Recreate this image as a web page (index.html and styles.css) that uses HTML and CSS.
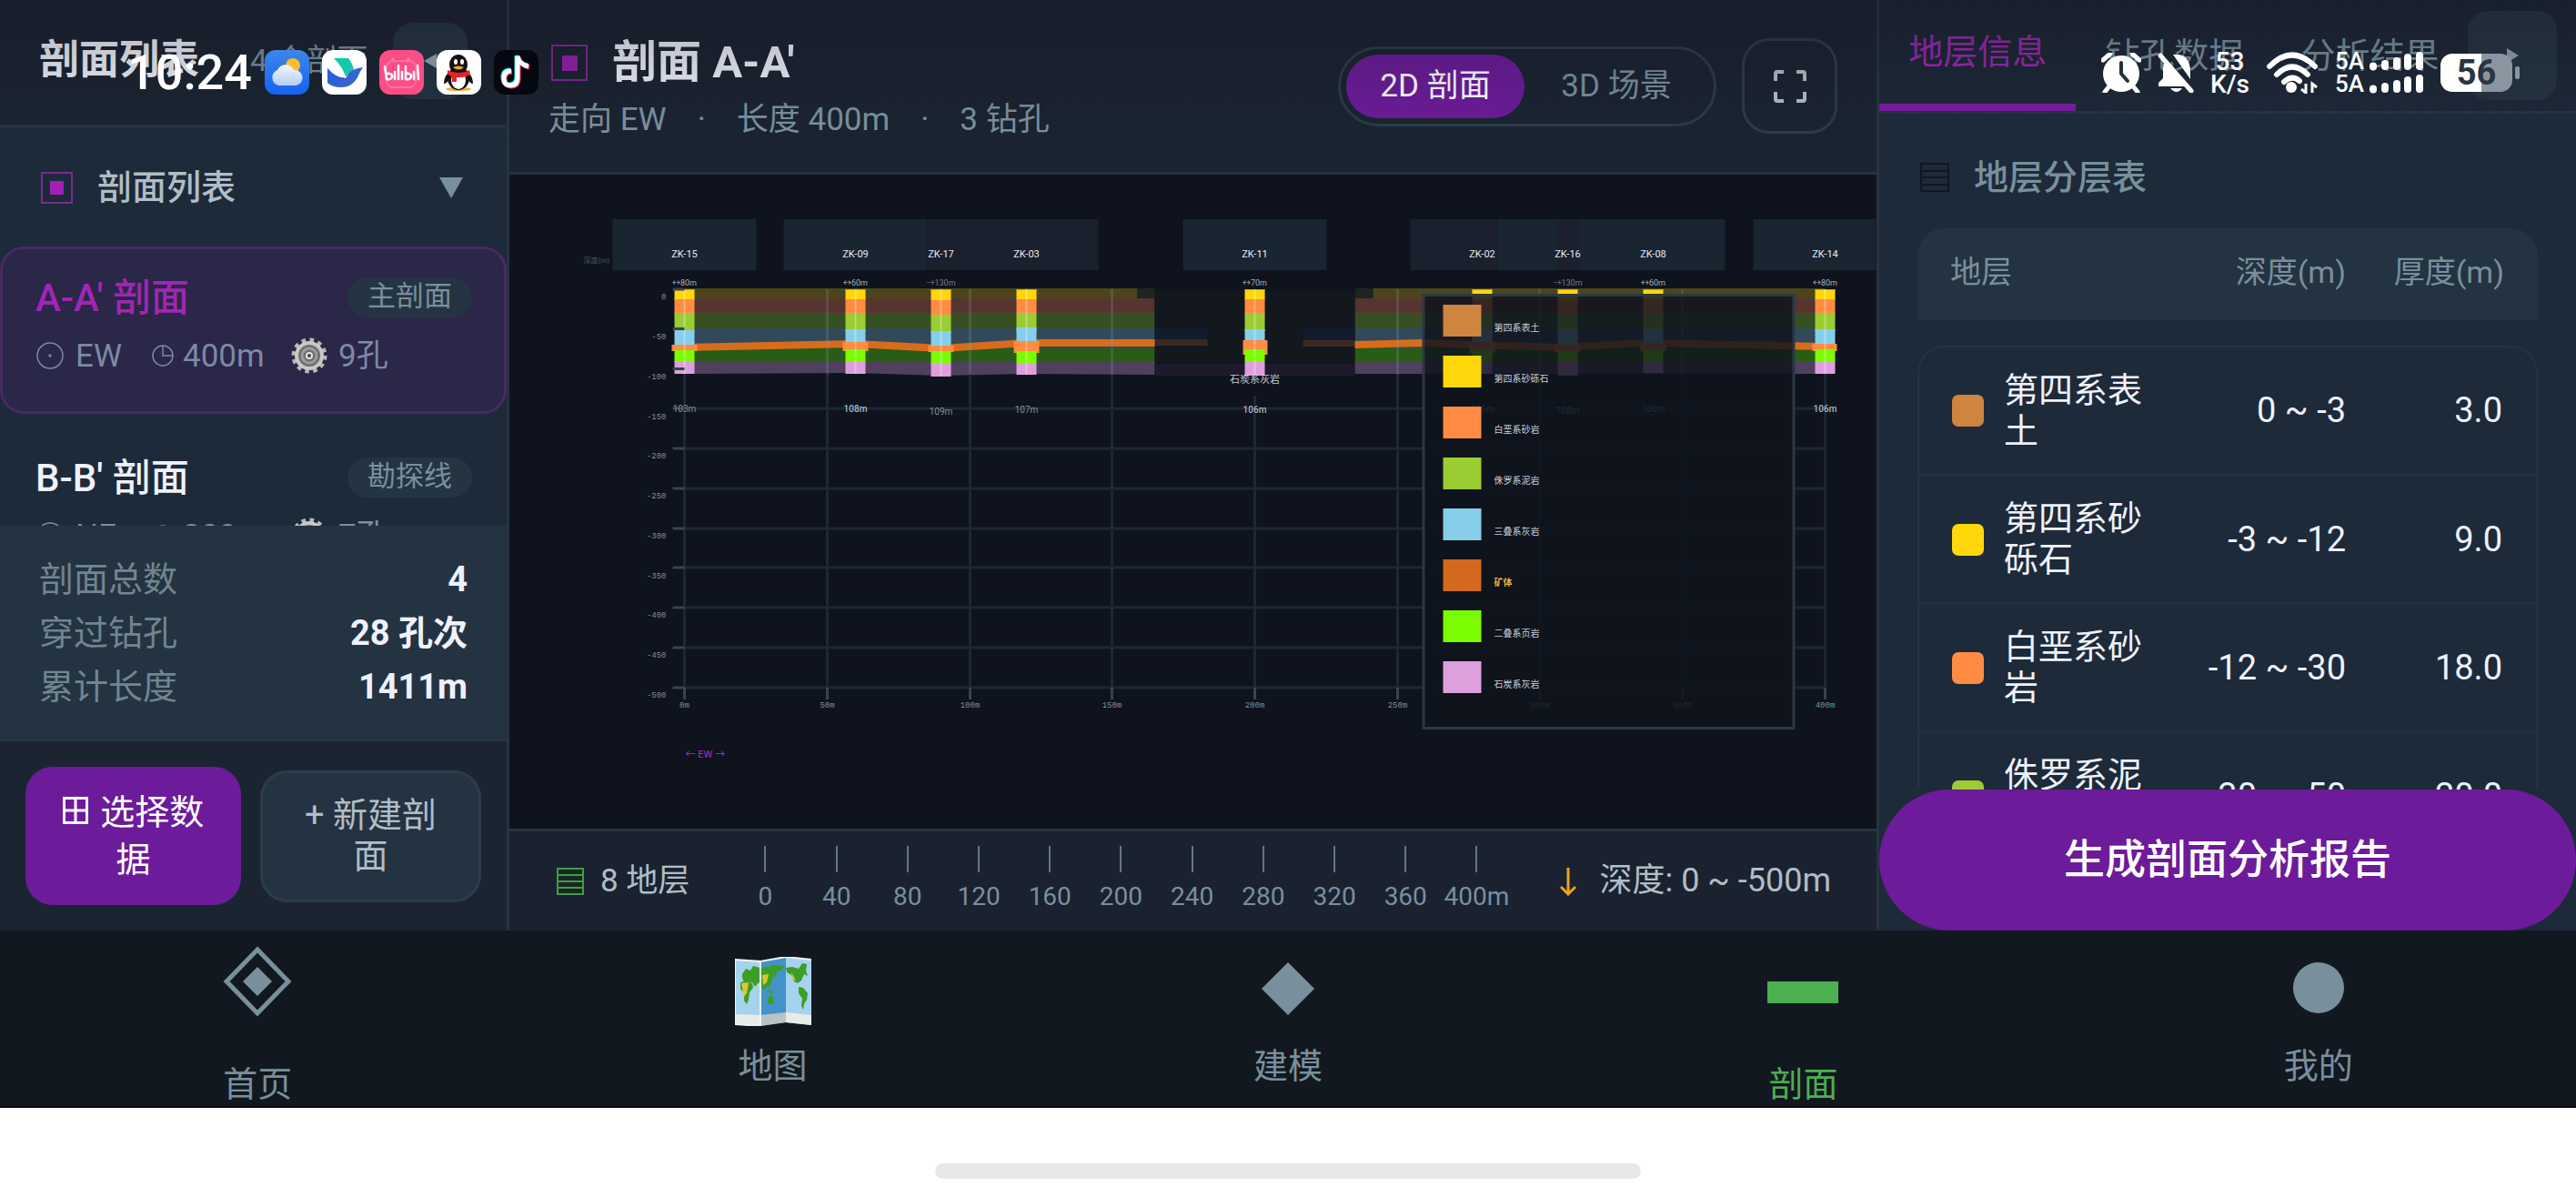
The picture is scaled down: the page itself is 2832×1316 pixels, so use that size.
FILE: index.html
```html
<!DOCTYPE html>
<html lang="zh-CN">
<head>
<meta charset="utf-8">
<meta name="viewport" content="width=device-width, initial-scale=1">
<title>剖面 A-A'</title>
<link rel="stylesheet" href="styles.css">
</head>
<body>
<div class="statusbar">
  <span class="clock">10:24</span>
  <div class="apps">
    <svg class="app" viewBox="0 0 49 49"><defs><linearGradient id="sky" x2="0" y2="1"><stop offset="0" stop-color="#3d86ea"/><stop offset="1" stop-color="#1463f3"/></linearGradient><linearGradient id="cloud" x2="0" y2="1"><stop offset="0" stop-color="#f3f7fd"/><stop offset="1" stop-color="#b3cef8"/></linearGradient></defs><rect width="49" height="49" rx="12" fill="url(#sky)"/><circle cx="31" cy="17" r="8" fill="#fdbb2d"/><path d="M15 39a9 9 0 0 1-1-17 10 10 0 0 1 18 0 8.500 8.500 0 0 1 2 17z" fill="url(#cloud)"/></svg>
    <svg class="app" viewBox="0 0 49 49"><rect width="49" height="49" rx="12" fill="#fff"/><path d="M13 9h16q5 6 6 13l-9 7q-4-11-13-20z" fill="#18c8ae"/><path d="M6 20q9 11 20 11 5-11 19-12-3 4-5 9-6 13-19 13Q11 41 6 36z" fill="#3563cf"/><path d="M6 20q9 11 20 11-3 5-8 8-7 0-12-4z" fill="#2f5fd6"/></svg>
    <svg class="app" viewBox="0 0 49 49"><rect width="49" height="49" rx="12" fill="#fb4d86"/><path d="M14 9l3 4M33 9l-3 4" stroke="#fd86ad" stroke-width="3"/><rect x="8" y="12" width="32" height="29" rx="7" fill="none" stroke="#fd6e9d" stroke-width="2"/><g fill="none" stroke="#fff" stroke-width="2.500" stroke-linecap="round"><path d="M6 18l2 14q6 1 6-3t-6-3M17 24v8M21 17v15M25 24v8M29 18v14q6 1 6-3t-6-3M38 24v8M42 17l1 15"/></g></svg>
    <svg class="app" viewBox="0 0 49 49"><rect width="49" height="49" rx="12" fill="#fff"/><ellipse cx="24" cy="43" rx="14" ry="2" fill="#f7a734"/><path d="M14 24Q8 29 8 37q3 0 5-4zM34 24q6 5 6 13-3 0-5-4z" fill="#111"/><ellipse cx="24" cy="31" rx="12" ry="13" fill="#111"/><ellipse cx="24" cy="33" rx="8" ry="10" fill="#fff"/><ellipse cx="24" cy="16" rx="10" ry="11" fill="#111"/><ellipse cx="21" cy="13" rx="2" ry="3" fill="#fff"/><ellipse cx="28" cy="13" rx="2" ry="3" fill="#fff"/><path d="M18 19q6-3 12 0-6 5-12 0z" fill="#fba81e"/><path d="M12 22q12 6 24 0l1 5q-8 4-15 3v5h-5v-6q-4-1-5-3z" fill="#e9202a"/></svg>
    <svg class="app" viewBox="0 0 49 49"><rect width="49" height="49" rx="12" fill="#050711"/><g fill="none" stroke-width="5"><path d="M18 22q-8 0-8 8t7 8q8 0 8-9V6q2 9 12 11" stroke="#25f4ee"/><path d="M20 24q-8 0-8 8t7 8q8 0 8-9V8q2 9 12 11" stroke="#fe2c55"/><path d="M19 23q-8 0-8 8t7 8q8 0 8-9V7q2 9 12 11" stroke="#fff"/></g></svg>
  </div>
  <div class="signals">
    <svg width="44" height="44" viewBox="0 0 44 44"><circle cx="22" cy="23" r="20" fill="#fff"/><path d="M2 8l8-7M42 8l-8-7M8 38l-4 5M36 38l4 5" stroke="#fff" stroke-width="5" stroke-linecap="round"/><path d="M22 11v12l7 8" fill="none" stroke="#26303f" stroke-width="4" stroke-linecap="round"/></svg>
    <svg width="40" height="44" viewBox="0 0 40 44"><path d="M17 2q18-2 19 18v9zM14 39h13q-6 8-13 0" fill="#fff"/><path d="M7 11l24 26H1v-4l5-5V18q0-4 1-7z" fill="#fff"/><path d="M3 3l34 39" stroke="#fff" stroke-width="5" stroke-linecap="round"/></svg>
    <span class="speed"><b>53</b><b>K/s</b></span>
    <svg width="58" height="46" viewBox="0 0 58 46"><g fill="none" stroke="#fff" stroke-width="6" stroke-linecap="round"><path d="M4 16q25-25 50 0M12 25q17-17 34 0M20 33q9-8 17-1"/></g><circle cx="28" cy="39" r="6" fill="#fff"/><path d="M44 35v10l-5-4M51 45V35l5 4" fill="none" stroke="#fff" stroke-width="3"/></svg>
    <span class="cells"><span class="speed"><b>5A</b><b>5A</b></span>
    <svg width="60" height="46" viewBox="0 0 60 46"><path d="M4 16.500v-1M17 16v-3M30 16v-6M42 16V6M55 16V4M4 41.500v-1M17 41v-3M30 41v-6M42 41V31M55 41V29" stroke="#fff" stroke-width="8" stroke-linecap="round"/></svg></span>
    <span class="battery">56</span>
  </div>
</div>

<div class="workspace">
  <aside class="panel panel-left">
    <header class="list-head">
      <h1>剖面列表</h1><span class="count">4 个剖面</span>
      <button class="collapse" aria-label="收起"><svg width="14" height="16" viewBox="0 0 14 16"><path d="M14 0v16L0 8z"/></svg></button>
    </header>
    <div class="list">
      <h2 class="group"><svg width="35" height="35" viewBox="0 0 35 35"><rect x="1" y="1" width="33" height="33" fill="none" stroke="#7b2a92" stroke-width="2"/><rect x="10" y="10" width="15" height="15" fill="#a020b8"/></svg>剖面列表<svg class="end" width="26" height="23" viewBox="0 0 26 23"><path d="M0 0h26L13 23z" fill="#78909c"/></svg></h2>
      <button class="profile active">
        <span class="row"><span class="name">A-A' 剖面</span><span class="badge">主剖面</span></span>
        <span class="meta"><svg class="compass" viewBox="0 0 32 32"><circle cx="16" cy="16" r="14"/><circle cx="16" cy="16" r="1"/></svg><span class="dir">EW</span><svg class="watch" viewBox="0 0 24 24"><circle cx="12" cy="12" r="11"/><path d="M12 1v11h11"/></svg><span class="len">400m</span><svg class="gear" viewBox="0 0 40 40"><use href="#gear"/></svg><span>9孔</span></span>
      </button>
      <button class="profile">
        <span class="row"><span class="name">B-B' 剖面</span><span class="badge">勘探线</span></span>
        <span class="meta"><svg class="compass" viewBox="0 0 32 32"><circle cx="16" cy="16" r="14"/><circle cx="16" cy="16" r="1"/></svg><span class="dir">NE</span><svg class="watch" viewBox="0 0 24 24"><circle cx="12" cy="12" r="11"/><path d="M12 1v11h11"/></svg><span class="len">300m</span><svg class="gear" viewBox="0 0 40 40"><use href="#gear"/></svg><span>7孔</span></span>
      </button>
    </div>
    <dl class="stats">
      <div><dt>剖面总数</dt><dd>4</dd></div>
      <div><dt>穿过钻孔</dt><dd>28 孔次</dd></div>
      <div><dt>累计长度</dt><dd>1411m</dd></div>
    </dl>
    <div class="actions">
      <button class="primary"><svg width="28" height="30" viewBox="0 0 28 30"><path d="M1.500 1.500h25v27h-25zM14 1v28M1 15h26" fill="none" stroke="#fff" stroke-width="3"/></svg> 选择数据</button>
      <button class="secondary">+ 新建剖面</button>
    </div>
  </aside>

  <main class="stage">
    <header class="stage-head">
      <div class="titles">
        <h2><svg width="40" height="40" viewBox="0 0 40 40"><rect x="1" y="1" width="38" height="38" fill="none" stroke="#7b2a92" stroke-width="2"/><rect x="12" y="12" width="17" height="17" fill="#9420a8"/></svg>剖面 A-A'</h2>
        <p><span>走向 EW</span><span>·</span><span>长度 400m</span><span>·</span><span>3 钻孔</span></p>
      </div>
      <div class="toggle"><button class="on">2D 剖面</button><button>3D 场景</button></div>
      <button class="full" aria-label="全屏"><svg width="36" height="36" viewBox="0 0 36 36"><path d="M2 12V4q0-2 2-2h7M25 2h7q2 0 2 2v8M34 24v8q0 2-2 2h-7M11 34H4q-2 0-2-2v-8" fill="none" stroke="#b0bec5" stroke-width="4"/></svg></button>
    </header>
    <svg class="chart" viewBox="560 192 1502 719" role="img" aria-label="A-A' 剖面图">
      <g fill="#192530"><path d="M673 241h158v56H673zM861 241h158v56H861zM1300 241h158v56h-158zM1645 241h251v56h-251zM1927 241h135v56h-135z"/></g>
      <g fill="#1a202e"><path d="M1019 241h188v56h-188zM1550 241h95v56h-95z"/></g>
      <path fill="#1a202e" d="M1712 241h24v56h-24z"/>
      <!-- strata between boreholes -->
      <g id="strata">
        <g fill="#4b4519"><path d="M752 317h498v11H752zM1509 317h497v11h-497z"/></g>
        <path fill="#1e2521" d="M1250 317h19v11h-19zM1489 317h20v11h-20z"/>
        <path fill="#56352f" d="M752 328h517v16H752zM1489 328h517v16h-517z"/>
        <path fill="#375023" d="M752 344h517v17H752zM1489 344h517v17h-517z"/>
        <path fill="#32495a" d="M752 361h517v22H752zM1489 361h517v22h-517z"/>
        <path fill="#295c15" d="M752 383h517v16H752zM1489 383h517v16h-517z"/>
        <path fill="#50405f" d="M752 398h517v14l-141-1-94 2-94-3-188 1zM1489 398h517v13h-517z"/>
        <path fill="#13181e" d="M1269 320h220v78h-220z"/>
        <path fill="#121c2c" d="M1269 361h58v13h-58zM1432 361h57v13h-57z"/>
        <path fill="#1c1a2b" d="M1269 400h220v13h-220z"/>
        <path fill="#3a2822" d="M1269 373h58v7h-58zM1432 374h57v7h-57z"/>
        <path fill="none" stroke="#d96c1c" stroke-width="8" d="M752 382l188-4 94 5 94-6h141M1489 379l74-2 150 5 94-5 199 4"/>
      </g>
      <g fill="none" stroke-width="3" stroke="#1c2835">
        <path d="M752 411v345M909 411v345M1066 411v345M1222 411v345M1379 435v321M1536 411v345M1692 411v345M1849 411v345M2006 411v345"/>
        <path d="M752 449h1254M752 493h1254M752 537h1254M752 581h1254M752 624h1254M752 668h1254M752 712h1254M752 756h1254"/>
      </g>
      <path stroke="#8aa0ac" stroke-opacity=".22" stroke-width="3" d="M909 318v94M1066 318v94M1222 318v94M1536 318v94M1692 318v94M1849 318v94"/>
      <!-- borehole columns -->
      <g id="bores">
        <path fill="#ffd70a" d="M741 318h22v12h-22zM929 318h22v12h-22zM1023 318h22v12h-22zM1117 318h22v12h-22zM1368 318h22v12h-22zM1618 318h22v12h-22zM1712 318h22v12h-22zM1806 318h22v12h-22zM1995 318h22v12h-22z"/>
        <path fill="#ff8c42" d="M741 329h22v16h-22zM929 329h22v16h-22zM1023 330h22v16h-22zM1117 329h22v16h-22zM1368 329h22v16h-22zM1618 329h22v16h-22zM1712 330h22v16h-22zM1806 329h22v16h-22zM1995 329h22v16h-22z"/>
        <path fill="#9acd32" d="M741 344h22v20h-22zM929 344h22v20h-22zM1023 346h22v20h-22zM1117 344h22v20h-22zM1368 344h22v20h-22zM1618 344h22v20h-22zM1712 346h22v20h-22zM1806 344h22v20h-22zM1995 344h22v20h-22z"/>
        <path fill="#87ceeb" d="M741 363h22v17h-22zM929 362h22v17h-22zM1023 364h22v17h-22zM1117 360h22v17h-22zM1368 362h22v15h-22zM1618 362h22v15h-22zM1712 362h22v17h-22zM1806 362h22v17h-22zM1995 362h22v17h-22z"/>
        <path fill="#ff8c42" d="M738 379h28v7h-28zM926 376h28v10h-28zM1020 380h28v7h-28zM1114 375h28v13h-28zM1366 374h27v16h-27zM1615 376h28v12h-28zM1709 379h28v8h-28zM1803 377h28v9h-28zM1992 378h27v8h-27z"/>
        <path fill="#7cfc00" d="M741 385h22v13h-22zM929 384h22v14h-22zM1023 386h22v14h-22zM1117 386h22v13h-22zM1368 384h22v14h-22zM1618 385h22v13h-22zM1712 386h22v13h-22zM1806 385h22v13h-22zM1995 384h22v14h-22z"/>
        <path fill="#dda0dd" d="M741 397h22v14h-22zM929 397h22v14h-22zM1023 399h22v15h-22zM1117 399h22v13h-22zM1368 398h22v15h-22zM1618 397h22v14h-22zM1712 398h22v15h-22zM1806 397h22v13h-22zM1995 397h22v14h-22z"/>
        <path stroke="#ff8c42" d="M741 318.500h22M929 318.500h22M1023 318.500h22M1117 318.500h22M1368 318.500h22M1618 318.500h22M1712 318.500h22M1806 318.500h22M1995 318.500h22"/>
        <path stroke="#fff" stroke-opacity=".3" stroke-width="2" d="M752 318v93M940 318v93M1034 318v95M1128 318v94M1379 318v95M2006 318v93"/>
      </g>
      <g fill="none" stroke="#384450" stroke-width="3"><path d="M739 318h13M739 361.500h13M739 405.500h13M739 449h13M739 493h13M739 537h13M739 581h13M739 624h13M739 668h13M739 712h13M739 756h13M752 756v13M909 756v13M1066 756v13M1222 756v13M1379 756v13M1536 756v13M1692 756v13M1849 756v13M2006 756v13"/></g>
      <g class="depth"><text x="732" y="329">0</text><text x="732" y="373">-50</text><text x="732" y="417">-100</text><text x="732" y="461">-150</text><text x="732" y="504">-200</text><text x="732" y="548">-250</text><text x="732" y="592">-300</text><text x="732" y="636">-350</text><text x="732" y="679">-400</text><text x="732" y="723">-450</text><text x="732" y="767">-500</text></g>
      <g class="dist"><text x="752" y="778">0m</text><text x="909" y="778">50m</text><text x="1066" y="778">100m</text><text x="1222" y="778">150m</text><text x="1379" y="778">200m</text><text x="1536" y="778">250m</text><text x="1692" y="778">300m</text><text x="1849" y="778">350m</text><text x="2006" y="778">400m</text></g>
      <text class="unit" x="641" y="289">深度(m)</text>
      <g class="hole"><text x="752" y="283">ZK-15</text><text x="940" y="283">ZK-09</text><text x="1034" y="283">ZK-17</text><text x="1128" y="283">ZK-03</text><text x="1379" y="283">ZK-11</text><text x="1629" y="283">ZK-02</text><text x="1723" y="283">ZK-16</text><text x="1817" y="283">ZK-08</text><text x="2006" y="283">ZK-14</text></g>
      <g class="offset"><text x="752" y="314">↔80m</text><text x="940" y="314">↔60m</text><text class="dim" x="1034" y="314">→130m</text><text x="1379" y="314">↔70m</text><text class="dim" x="1723" y="314">→130m</text><text x="1817" y="314">↔60m</text><text x="2006" y="314">↔80m</text></g>
      <g class="total"><text x="752" y="453">103m</text><text class="strong" x="940" y="453">108m</text><text x="1034" y="456">109m</text><text x="1128" y="454">107m</text><text class="strong" x="1379" y="454">106m</text><text x="1629" y="453">106m</text><text x="1723" y="455">108m</text><text x="1817" y="453">106m</text><text class="strong" x="2006" y="453">106m</text></g>
      <text class="label" x="1379" y="421">石炭系灰岩</text>
      <rect x="1564.500" y="324.500" width="407" height="476" fill="#0e131d" fill-opacity=".84" stroke="#2b3846" stroke-width="3"/>
      <g>
        <path fill="#cd853f" d="M1586 335h42v35h-42z"/><path fill="#ffd70a" d="M1586 391h42v35h-42z"/><path fill="#ff8c42" d="M1586 447h42v35h-42z"/><path fill="#9acd32" d="M1586 503h42v35h-42z"/><path fill="#87ceeb" d="M1586 559h42v35h-42z"/><path fill="#d2691e" d="M1586 615h42v35h-42z"/><path fill="#7cfc00" d="M1586 671h42v35h-42z"/><path fill="#dda0dd" d="M1586 727h42v35h-42z"/>
      </g>
      <g class="key"><text x="1642" y="364">第四系表土</text><text x="1642" y="420">第四系砂砾石</text><text x="1642" y="476">白垩系砂岩</text><text x="1642" y="532">侏罗系泥岩</text><text x="1642" y="588">三叠系灰岩</text><text class="ore" x="1642" y="644">矿体</text><text x="1642" y="700">二叠系页岩</text><text x="1642" y="756">石炭系灰岩</text></g>
      <text class="course" x="753" y="833">← EW →</text>
    </svg>
    <footer class="scalebar">
      <span class="layers"><svg width="30" height="30" viewBox="0 0 30 30"><path d="M1 1h28v28H1zM1 8h28M1 15h28M1 22h28" fill="#17291f" stroke="#439a4c" stroke-width="2"/></svg>8 地层</span>
      <ol class="ruler"><li>0</li><li>40</li><li>80</li><li>120</li><li>160</li><li>200</li><li>240</li><li>280</li><li>320</li><li>360</li><li>400m</li></ol>
      <span class="range"><svg width="18" height="32" viewBox="0 0 18 32"><path d="M9 1v29M1 22l8 8 8-8" fill="none" stroke="#f0a020" stroke-width="3"/></svg>深度: 0 ~ -500m</span>
    </footer>
  </main>

  <aside class="panel panel-right">
    <div class="tabs" role="tablist">
      <button class="tab on" role="tab" aria-selected="true">地层信息</button><button class="tab" role="tab">钻孔数据</button><button class="tab" role="tab">分析结果</button>
      <button class="collapse big" aria-label="展开"><svg width="13" height="16" viewBox="0 0 13 16"><path d="M0 0v16l13-8z"/></svg></button>
    </div>
    <div class="details">
      <h3><svg width="32" height="32" viewBox="0 0 32 32"><path d="M1 1h30v30H1zM1 9h30M1 16h30M1 24h30" fill="none" stroke="#0f1722" stroke-width="2"/></svg>地层分层表</h3>
      <table>
        <colgroup><col class="c-name"><col class="c-depth"><col></colgroup>
        <thead><tr><th>地层</th><th>深度(m)</th><th>厚度(m)</th></tr></thead>
        <tbody>
          <tr><td><div class="layer"><i style="background:#cd853f"></i><span>第四系表土</span></div></td><td>0 ~ -3</td><td>3.0</td></tr>
          <tr><td><div class="layer"><i style="background:#ffd70a"></i><span>第四系砂砾石</span></div></td><td>-3 ~ -12</td><td>9.0</td></tr>
          <tr><td><div class="layer"><i style="background:#ff8c42"></i><span>白垩系砂岩</span></div></td><td>-12 ~ -30</td><td>18.0</td></tr>
          <tr><td><div class="layer"><i style="background:#9acd32"></i><span>侏罗系泥岩</span></div></td><td>-30 ~ -50</td><td>20.0</td></tr>
        </tbody>
      </table>
    </div>
    <button class="report">生成剖面分析报告</button>
  </aside>
</div>

<nav class="tabbar">
  <a class="tall" href="#home"><svg width="76" height="108" viewBox="0 0 76 108"><path d="M38 4l34 35-34 35L4 39z" fill="none" stroke="#78909c" stroke-width="5"/><path d="M38 23l16 16-16 16-16-16z" fill="#78909c"/></svg>首页</a>
  <a href="#map"><svg width="84" height="76" viewBox="0 0 84 76"><path d="M0 3l28 2v71L0 74z" fill="#a5d3ee"/><path d="M28 5L56 0v72l-28 4z" fill="#4493c8"/><path d="M56 0l28 3v72l-28-3z" fill="#a5d3ee"/><path d="M0 63l28 1v12L0 74zM56 61l28 3v11l-28-3z" fill="#e8ece9"/><path d="M28 64l28-3v11l-28 4z" fill="#b9c3c3"/><path d="M8 19l4-6 5 2 3-5 8 2 8-1 6-2 12 1-3 5-5 1-2 6-3 1-1 7-3 4-3-2-2 5-3-4-3-5-4 5-3-5-5-1-4 1-2-5zM6 28l7-2 6 3 1 5-4 5-1 8-2 5-3-4v-8l-4-5zM56 12l7-1 7 2 4-6 5 1-1 7 2 6-4-2-3 7-4 3-4-2-3-7-5-3zM70 33l5 1 5 6-1 7-3 5-1 6-2-4 1-8-4-6zM36 45l4-4 3 5-2 6-5-1zM36 36l4 1 2 2-4 1z" fill="#3e9d26"/><path d="M7 29l8-1-2 12-3 4zM30 20l7-1-2 9-4 3zM62 17l5 9-4-2z" fill="#dcc636"/><path d="M0 3l28 2v71L0 74zM28 5L56 0l28 3" fill="none" stroke="#f3f3f3" stroke-width="2"/></svg>地图</a>
  <a href="#model"><svg width="84" height="76" viewBox="0 0 84 76"><path d="M42 6l29 29-29 29-29-29z" fill="#78909c"/></svg>建模</a>
  <a class="tall on" href="#section"><svg width="78" height="108" viewBox="0 0 78 108"><path d="M0 39h78v24H0z" fill="#4caf50"/></svg>剖面</a>
  <a href="#me"><svg width="84" height="76" viewBox="0 0 84 76"><circle cx="42" cy="34" r="28" fill="#78909c"/></svg>我的</a>
</nav>
<div class="home-area"><span></span></div>

<svg width="0" height="0" class="defs"><defs><g id="gear"><circle cx="20" cy="20" r="17" fill="none" stroke="#b9b9b4" stroke-width="5" stroke-dasharray="4.500 4.400"/><circle cx="20" cy="20" r="16" fill="#c9c9c4"/><circle cx="20" cy="20" r="12" fill="#6c6f72"/><circle cx="20" cy="20" r="8" fill="none" stroke="#9a9c9e" stroke-width="3"/><circle cx="20" cy="20" r="4" fill="#e3e3e0"/><circle cx="20" cy="20" r="2" fill="#444"/></g></defs></svg>
</body>
</html>
```
FILE: styles.css
```css
* { box-sizing: border-box; }
html, body { height: 100%; }
body {
  margin: 0;
  display: flex;
  flex-direction: column;
  position: relative;
  background: #fff;
  color: #eef1fb;
  font-family: Roboto, "Noto Sans CJK SC", sans-serif;
  font-size: 38px;
  line-height: 45px;
  overflow: hidden;
}
h1, h2, h3, p, dl, dd, ol { margin: 0; padding: 0; }
button { font: inherit; color: inherit; border: 0; margin: 0; padding: 0; background: none; }
svg { flex: none; }
.defs { position: absolute; }

/* system status bar, laid over the page */
.statusbar {
  position: absolute;
  z-index: 5;
  top: 0; left: 0; right: 0;
  height: 140px;
  padding: 55px 62px 36px 140px;
  display: flex;
  align-items: center;
  background: linear-gradient(rgba(22, 24, 34, .3), rgba(22, 26, 36, 0));
  pointer-events: none;
  color: #fff;
}
.clock { width: 151px; font-size: 54px; font-weight: 500; }
.apps { display: flex; gap: 14px; }
.app { width: 49px; height: 49px; }
.signals { margin-left: auto; display: flex; align-items: center; gap: 18px; }
.speed { display: flex; flex-direction: column; align-items: center; font-size: 28px; line-height: 25px; }
.speed b { font-weight: 500; }
.cells { display: flex; gap: 6px; align-items: center; }
.cells .speed { font-size: 26px; }
.battery {
  position: relative;
  width: 79px; height: 42px;
  margin-right: 8px;
  border-radius: 13px;
  background: linear-gradient(90deg, #fff 57%, #8b959f 57%);
  color: #2a3443;
  font-size: 38px; font-weight: 700; line-height: 42px; text-align: center;
}
.battery::after {
  content: "";
  position: absolute;
  right: -8px; top: 14px;
  width: 5px; height: 14px;
  border-radius: 2px;
  background: #8b959f;
}

.workspace {
  flex: 1;
  min-height: 0;
  display: grid;
  grid-template-columns: 560px minmax(0, 1fr) 769px;
  grid-template-rows: minmax(0, 1fr);
}
.panel { display: flex; flex-direction: column; min-height: 0; background: #1d2a39; }
.panel-left { border-right: 3px solid #263340; }
.panel-right { border-left: 3px solid #263340; }

/* left panel */
.list-head {
  height: 141px;
  flex: none;
  padding: 0 43px 4px;
  display: flex;
  align-items: center;
  background: linear-gradient(#1a1f2e, #1a2531);
  border-bottom: 4px solid #243240;
}
.list-head h1 { font-size: 44px; font-weight: 700; color: #f0f2fa; }
.count { margin-left: 56px; font-size: 34px; color: #78909c; }
.collapse {
  width: 82px; height: 84px;
  margin-left: auto;
  border-radius: 22px;
  background: #243341;
  display: flex; align-items: center; justify-content: center;
}
.collapse svg { fill: #90a4ae; }
.collapse.big { width: 98px; height: 98px; margin-right: 21px; }
.list { flex: 1; min-height: 0; overflow: hidden; display: flex; flex-direction: column; }
.group {
  height: 130px;
  flex: none;
  padding: 0 48px 0 45px;
  display: flex; align-items: center;
  gap: 27px;
  font-size: 38px; font-weight: 500;
  color: #b0bec5;
}
.group .end { margin-left: auto; }
.profile {
  flex: none;
  height: 184px;
  margin-bottom: 14px;
  padding: 28px 35px 0 36px;
  border: 3px solid transparent;
  border-radius: 26px;
  display: flex;
  flex-direction: column;
  align-items: stretch;
  justify-content: flex-start;
  text-align: left;
}
.profile.active { background: #2a2748; border-color: #482a62; }
.profile .row { display: flex; align-items: center; justify-content: space-between; height: 50px; }
.profile .name { font-size: 42px; font-weight: 500; }
.active .name { color: #a126b4; }
.badge {
  height: 44px;
  padding: 0 22px;
  border-radius: 22px;
  background: #253443;
  color: #78909c;
  font-size: 31px; line-height: 42px;
}
.meta { display: flex; align-items: center; margin-top: 16px; height: 46px; font-size: 35px; color: #78909c; }
.active .meta { color: #7d89a6; }
.meta svg { fill: none; stroke: currentColor; stroke-width: 1.5; }
.compass { width: 32px; height: 32px; margin-right: 12px; }
.dir { width: 84px; }
.watch { width: 24px; height: 24px; margin-right: 10px; }
.len { width: 119px; }
.meta .gear { width: 40px; height: 40px; margin-right: 12px; stroke: none; }
.stats { flex: none; height: 237px; padding: 30px 43px 0; background: #243342; }
.stats div { display: flex; justify-content: space-between; height: 59px; line-height: 59px; }
.stats dt { color: #71858f; }
.stats dd { font-weight: 700; }
.actions {
  flex: none;
  height: 208px;
  padding: 0 28px;
  display: flex; align-items: center;
  gap: 21px;
  background: #1a2531;
}
.actions button { flex: 1; padding: 0 36px; border-radius: 30px; }
.actions .primary { height: 152px; background: #6c1b9a; color: #fff; line-height: 52px; }
.actions .primary svg { margin-right: 4px; }
.actions .secondary { height: 145px; border: 3px solid #2d3c4a; background: #243342; color: #b0bec5; }

/* centre stage */
.stage { display: flex; flex-direction: column; min-width: 0; min-height: 0; background: #0e131d; }
.stage-head {
  flex: none;
  height: 192px;
  padding: 0 43px;
  display: flex; align-items: center;
  background: linear-gradient(#1a1f2e, #1a2531);
  border-bottom: 3px solid #243240;
}
.titles { margin-right: auto; padding-top: 10px; }
.titles h2 { display: flex; align-items: center; gap: 27px; height: 64px; padding-left: 3px; font-size: 49px; font-weight: 700; }
.titles p { display: flex; gap: 34px; height: 62px; line-height: 62px; font-size: 35px; color: #78909c; }
.toggle { height: 88px; padding: 6px; border: 3px solid #2b3a47; border-radius: 44px; display: flex; font-size: 35px; }
.toggle button { width: 196px; border-radius: 36px; color: #78909c; }
.toggle button + button { width: 202px; }
.toggle .on { background: #6a1b98; color: #fff; }
.full { width: 105px; height: 105px; margin-left: 28px; border: 3px solid #2b3a47; border-radius: 30px; display: flex; align-items: center; justify-content: center; }

.chart { flex: 1; min-height: 0; width: 100%; }
.chart text { font-size: 11px; }
.chart .depth text, .chart .dist text { font-family: "Liberation Mono", monospace; font-size: 9px; fill: #84909a; }
.chart .depth { text-anchor: end; }
.chart .dist, .chart .hole, .chart .offset, .chart .total, .chart .label { text-anchor: middle; }
.chart .unit { font-size: 8px; fill: #485561; }
.chart .hole { fill: #e8ecf5; }
.chart .offset text { font-size: 9px; fill: #a5b2bd; }
.chart .offset .dim { fill: #857a7c; }
.chart .total text { font-size: 10px; fill: #83939d; }
.chart .total .strong { fill: #a9bac3; font-weight: 500; }
.chart .label { fill: #c3cad3; }
.chart .key text { font-size: 10px; fill: #c8ceda; }
.chart .key .ore { fill: #f2b03a; font-weight: 700; }
.chart .course { fill: #b02ac6; }

.scalebar {
  flex: none;
  height: 112px;
  padding: 0 50px 0 52px;
  display: flex; align-items: center;
  gap: 44px;
  background: #1a2230;
  border-top: 3px solid #2a3340;
  font-size: 35px;
  color: #b0bec5;
}
.layers, .range { display: flex; align-items: center; gap: 18px; white-space: nowrap; }
.range { gap: 26px; margin-left: 8px; font-size: 36px; }
.ruler { flex: 1; padding-top: 6px; display: grid; grid-template-columns: repeat(11, minmax(0, 1fr)); list-style: none; font-size: 28px; line-height: 54px; color: #78909c; text-align: center; }
.ruler li::before { content: ""; display: block; width: 2px; height: 29px; margin: 0 auto; background: #667680; }

/* right panel */
.tabs { flex: none; height: 125px; display: flex; align-items: stretch; background: linear-gradient(#1a2331, #1d2838); border-bottom: 3px solid #253342; }
.tab { width: 216px; white-space: nowrap; color: #78909c; }
.tab.on { width: 217px; color: #9c27b0; border-bottom: 8px solid #7a1aa2; }
.tabs .collapse { align-self: center; }
.details { flex: 1; min-height: 0; overflow: hidden; padding: 0 42px; }
.details h3 { height: 126px; padding: 14px 3px 0; display: flex; align-items: center; gap: 27px; font-weight: 500; font-size: 38px; color: #78909c; }
table { width: 100%; table-layout: fixed; border-spacing: 0; }
.c-name { width: 281px; }
.c-depth { width: 190px; }
th { height: 101px; padding: 0 0 4px; background: #243342; color: #78909c; font-size: 34px; font-weight: 400; text-align: right; }
th:first-child { padding-left: 36px; text-align: left; border-radius: 30px 0 0 0; }
th:last-child { border-radius: 0 30px 0 0; }
th:last-child, td:last-child { padding-right: 37px; }
tbody::before { content: ""; display: block; height: 28px; }
td { height: 141px; padding: 0; border-bottom: 3px solid #223040; text-align: right; }
td:first-child { padding-left: 36px; text-align: left; border-left: 2px solid #243342; }
td:last-child { border-right: 2px solid #243342; }
tbody tr:first-child td { height: 144px; border-top: 2px solid #243342; }
tbody tr:first-child td:first-child { border-top-left-radius: 30px; }
tbody tr:first-child td:last-child { border-top-right-radius: 30px; }
.layer { display: flex; align-items: center; gap: 22px; }
.layer i { flex: none; width: 35px; height: 35px; border-radius: 7px; }
.layer span { width: 160px; }
.report { flex: none; height: 155px; border-radius: 78px; background: #6c1b9a; color: #fff; font-size: 45px; font-weight: 500; }

/* bottom navigation */
.tabbar { flex: none; height: 195px; display: grid; grid-template-columns: repeat(5, 1fr); background: #12181f; border-bottom: 2px solid #06080b; }
.tabbar a { display: flex; flex-direction: column; align-items: center; gap: 22px; padding-top: 29px; color: #78909c; text-decoration: none; line-height: 44px; }
.tabbar a.tall { padding-top: 17px; }
.tabbar a.on { color: #4caf50; }
.home-area { flex: none; height: 98px; display: flex; justify-content: center; padding-top: 61px; background: #fff; }
.home-area span { width: 776px; height: 17px; border-radius: 9px; background: #e8e8e8; }
```
